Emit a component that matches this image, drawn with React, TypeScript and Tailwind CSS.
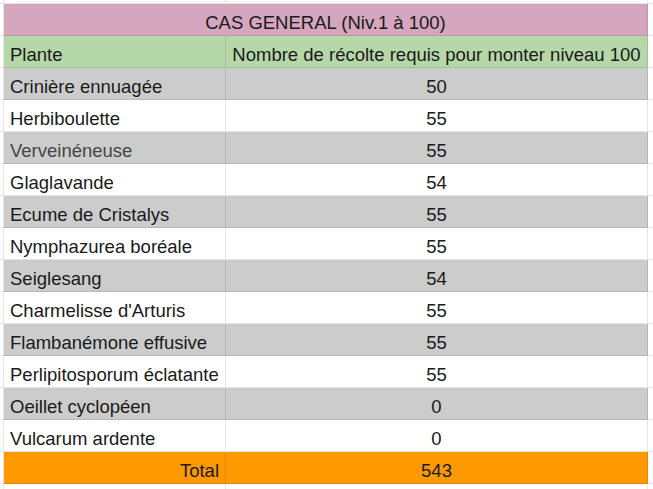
const plants: { name: string; count: number; muted?: boolean }[] = [
  { name: "Crinière ennuagée", count: 50 },
  { name: "Herbiboulette", count: 55 },
  { name: "Verveinéneuse", count: 55, muted: true },
  { name: "Glaglavande", count: 54 },
  { name: "Ecume de Cristalys", count: 55 },
  { name: "Nymphazurea boréale", count: 55 },
  { name: "Seiglesang", count: 54 },
  { name: "Charmelisse d'Arturis", count: 55 },
  { name: "Flambanémone effusive", count: 55 },
  { name: "Perlipitosporum éclatante", count: 55 },
  { name: "Oeillet cyclopéen", count: 0 },
  { name: "Vulcarum ardente", count: 0 },
];

const cell = "border-r border-b border-black/10 flex items-end pb-[3px] overflow-hidden whitespace-nowrap";

export default function App() {
  const total = plants.reduce((sum, p) => sum + p.count, 0);

  return (
    <div
      className="w-[653px] h-[489px] bg-white overflow-hidden text-[#1a1a1a] text-[18.5px] leading-none"
      style={{ fontFamily: '"Liberation Sans", Arial, sans-serif' }}
    >
      <div className="grid grid-cols-[4px_222px_422px_1fr] grid-rows-[4px_repeat(15,32px)_1fr] h-full">
        {/* top margin strip */}
        <div className="border-r border-b border-black/10" />
        <div className="border-r border-b border-black/10" />
        <div className="border-r border-b border-black/10" />
        <div className="border-b border-black/10" />

        {/* title */}
        <div className="border-r border-b border-black/10" />
        <div className={`${cell} col-span-2 justify-center bg-[#d5a6bd]`}>
          CAS GENERAL (Niv.1 à 100)
        </div>
        <div className="border-b border-black/10" />

        {/* header */}
        <div className="border-r border-b border-black/10" />
        <div className={`${cell} bg-[#b6d7a8] pl-[6px]`}>Plante</div>
        <div className={`${cell} bg-[#b6d7a8] justify-center`}>
          Nombre de récolte requis pour monter niveau 100
        </div>
        <div className="border-b border-black/10" />

        {/* rows */}
        {plants.map((p, i) => {
          const bg = i % 2 === 0 ? "bg-[#cccccc]" : "bg-white";
          return (
            <div key={p.name} className="contents">
              <div className="border-r border-b border-black/10" />
              <div className={`${cell} ${bg} pl-[6px] ${p.muted ? "text-[#444]" : ""}`}>{p.name}</div>
              <div className={`${cell} ${bg} justify-center`}>{p.count}</div>
              <div className="border-b border-black/10" />
            </div>
          );
        })}

        {/* total */}
        <div className="border-r border-b border-black/10" />
        <div className={`${cell} bg-[#ff9900] justify-end pr-[6px]`}>Total</div>
        <div className={`${cell} bg-[#ff9900] justify-center`}>{total}</div>
        <div className="border-b border-black/10" />

        {/* bottom strip */}
        <div className="border-r border-black/10" />
        <div className="border-r border-black/10" />
        <div className="border-r border-black/10" />
        <div />
      </div>
    </div>
  );
}
